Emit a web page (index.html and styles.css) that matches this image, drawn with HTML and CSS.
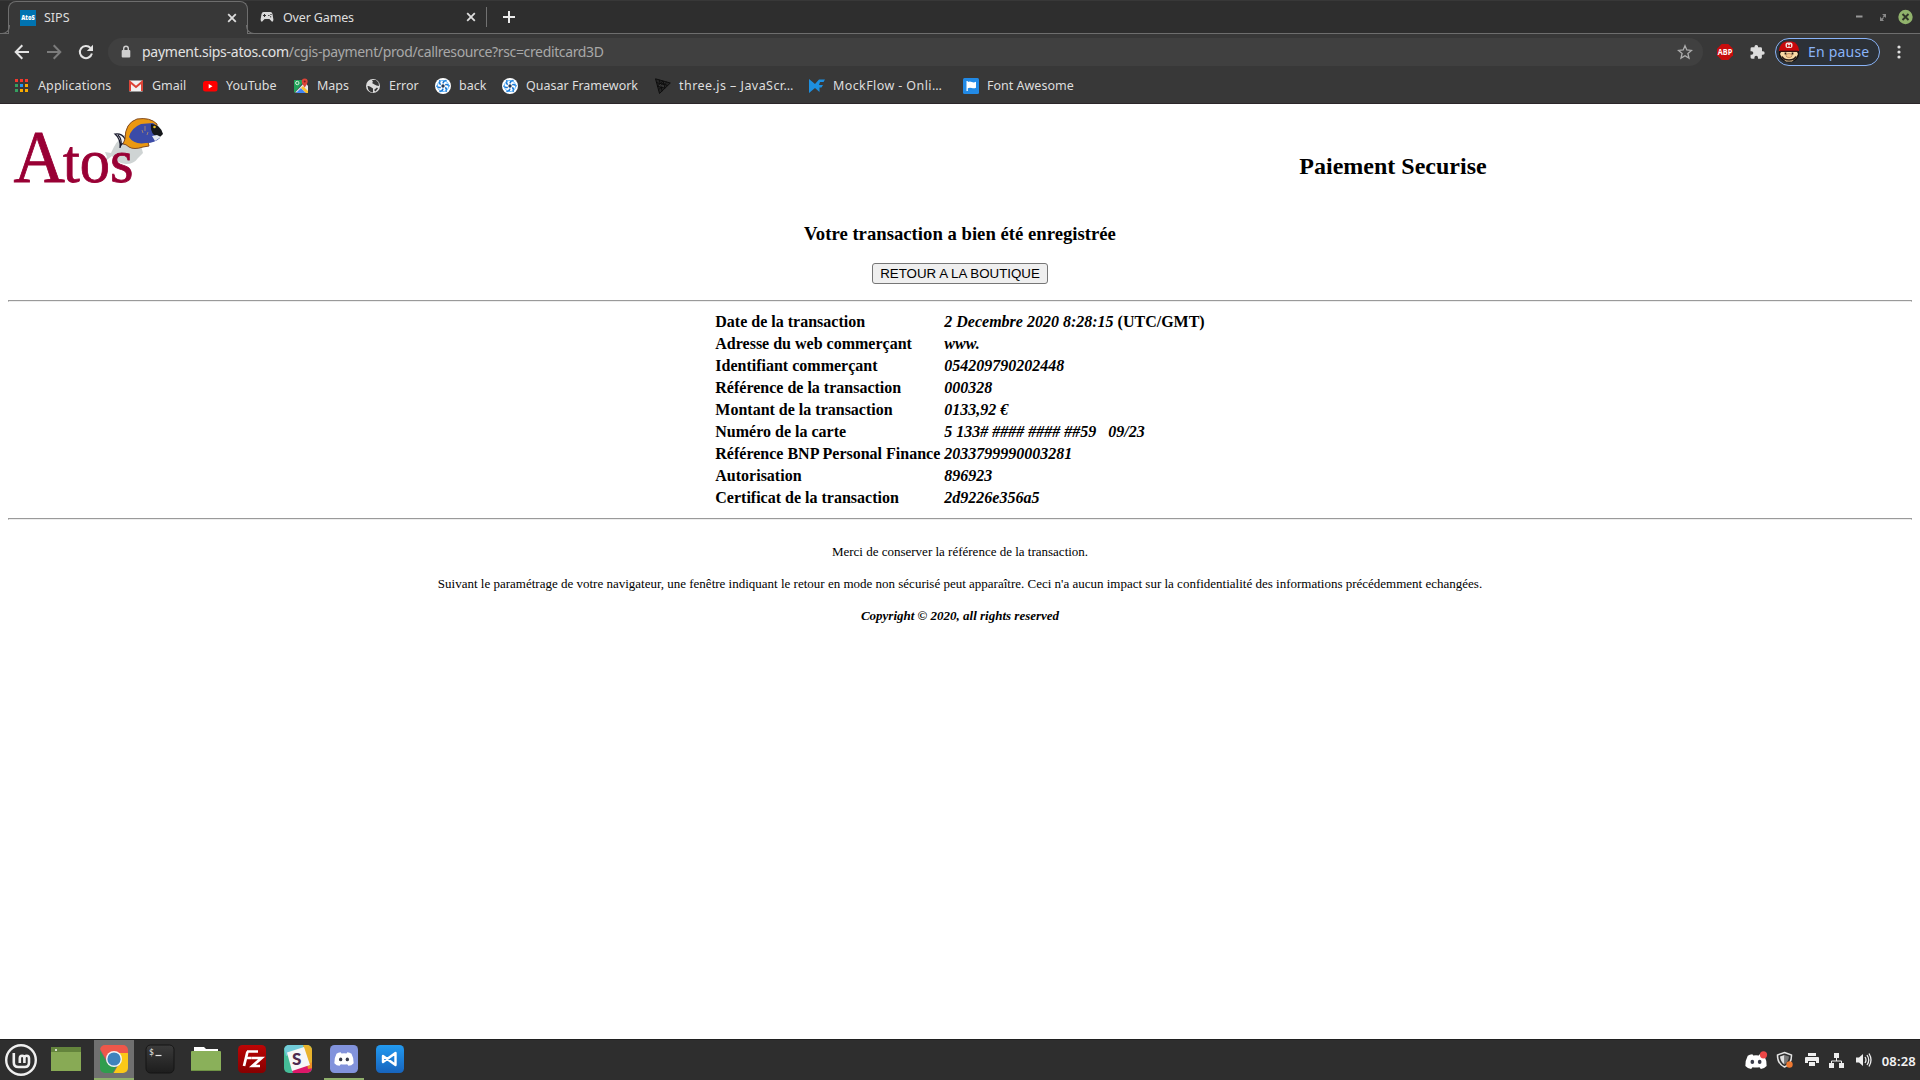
FILE: index.html
```html
<!DOCTYPE html>
<html lang="fr">
<head>
<meta charset="utf-8">
<title>SIPS</title>
<link rel="stylesheet" href="styles.css">
</head>
<body>
<svg width="0" height="0" class="defs">
  <symbol id="quasar" viewBox="0 0 16 16"><circle cx="8" cy="8" r="8" fill="#fff"/><g fill="none" stroke="#1976d2" stroke-width="1.5"><path id="arm" d="M8 5.4Q8.3 2.8 11.6 2.6"/><use href="#arm" transform="rotate(60 8 8)"/><use href="#arm" transform="rotate(120 8 8)"/><use href="#arm" transform="rotate(180 8 8)"/><use href="#arm" transform="rotate(240 8 8)"/><use href="#arm" transform="rotate(300 8 8)"/></g><circle cx="8" cy="8" r="5.6" fill="none" stroke="#42a5f5" stroke-width=".8"/><circle cx="8" cy="8" r="1.7" fill="#263b59"/></symbol>
  <symbol id="close" viewBox="0 0 10 10"><path d="M1.2 1.2l7.6 7.6M8.8 1.2L1.2 8.8" stroke="#dedede" stroke-width="1.8"/></symbol>
  <symbol id="discord" viewBox="0 0 24 18"><path fill="#fff" d="M8 1L9 2.4Q12 2 15 2.4L16 1Q19 1.2 21 2.6Q24 8 23.6 14Q21 17 17.3 17.2L15.8 15.2Q12 16 8.2 15.2L6.700 17.2Q3 17 .4 14Q0 8 3 2.6Q5 1.2 8 1z"/><ellipse cx="8" cy="9.5" rx="2" ry="2.3" class="eye"/><ellipse cx="16" cy="9.5" rx="2" ry="2.3" class="eye"/></symbol>
</svg>

<header class="browser">
  <div class="tabs">
    <div class="tab tab-active">
      <svg class="favicon" width="16" height="16" viewBox="0 0 16 16"><rect width="16" height="16" fill="#0073b1"/><text x="1.2" y="10.4" textLength="13.6" lengthAdjust="spacingAndGlyphs" class="atos-mark">AtoS</text></svg>
      <span class="tab-title t-sips">SIPS</span>
      <svg class="tab-close" width="10" height="10"><use href="#close"/></svg>
    </div>
    <div class="tab tab-second">
      <svg width="14" height="12" viewBox="0 0 14 12"><path fill="#d8d8d8" d="M3.5 1h7Q12 1 12.5 3L13.4 8.5Q13.4 10.8 12 10.8L9.4 8H4.6L2 10.8Q.6 10.8.6 8.5L1.5 3Q2 1 3.5 1z"/><path stroke="#2e2e2e" d="M3 4.5h3M4.5 3v3M8.2 4.5h1.3M10.4 3.5h1.2M10 5.8h1.2"/></svg>
      <span class="tab-title t-games">Over Games</span>
      <svg class="tab-close" width="10" height="10"><use href="#close"/></svg>
    </div>
    <i class="tab-separator"></i>
    <svg class="new-tab" width="12" height="12" viewBox="0 0 12 12"><path d="M6 0v12M0 6h12" stroke="#ececec" stroke-width="2"/></svg>
    <div class="window-buttons">
      <svg width="62" height="16" viewBox="0 0 62 16"><path d="M0 7.500h6.500" stroke="#979797" stroke-width="2"/><path fill="#888" d="M26 5h4v4l-1.300-1.300-1.500 1-.5-.7 1-1.500zM24 7.500v4.500h4l-1.300-1.500 1-1-.7-1-1.500 1z"/><circle cx="49.500" cy="8" r="7.200" fill="#91b36c"/><path d="M46.500 5l6 6M52.500 5l-6 6" stroke="#303528" stroke-width="1.900"/></svg>
    </div>
  </div>

  <div class="toolbar">
    <svg class="nav" width="16" height="16" viewBox="0 0 16 16"><path d="M15 8H2M8.300 1.300L1.700 8l6.600 6.700" fill="none" stroke="#e4e4e4" stroke-width="2"/></svg>
    <svg class="nav" width="16" height="16" viewBox="0 0 16 16"><path d="M1 8h13M7.700 1.300L14.300 8l-6.600 6.700" fill="none" stroke="#7c7c7c" stroke-width="2"/></svg>
    <svg class="nav" width="16" height="16" viewBox="0 0 16 16"><path d="M13.900 9.500A6.100 6.100 0 1 1 12.500 3.900" fill="none" stroke="#e4e4e4" stroke-width="2"/><path d="M15 .8V7H8.800z" fill="#e4e4e4"/></svg>
    <div class="address">
      <svg width="10" height="14" viewBox="0 0 10 14"><path d="M2.700 6V3.600a2.300 2.300 0 0 1 4.600 0V6" fill="none" stroke="#cfcfcf" stroke-width="1.400"/><rect x=".7" y="5" width="8.600" height="7.600" rx="1" fill="#cfcfcf"/></svg>
      <span class="url"><b>payment.sips-atos.com</b>/cgis-payment/prod/callresource?rsc=creditcard3D</span>
      <svg class="star" width="16" height="16" viewBox="0 0 16 16"><path d="M8 1.700l1.800 4.300 4.700.4-3.600 3.100 1.100 4.600L8 11.700l-4 2.400 1.100-4.600L1.500 6.400l4.700-.4z" fill="none" stroke="#adadad" stroke-width="1.300"/></svg>
    </div>
    <svg class="abp" width="16" height="16" viewBox="0 0 16 16"><path fill="#c70d0d" d="M4.700 0h6.600L16 4.700v6.600L11.300 16H4.700L0 11.300V4.700z"/><text x=".8" y="10.900" textLength="14.400" lengthAdjust="spacingAndGlyphs" class="abp-text">ABP</text></svg>
    <svg class="puzzle" width="16" height="16" viewBox="0 0 24 24"><path fill="#dcdcdc" d="M21 11h-1.500V7a2 2 0 0 0-2-2h-4V3.500a2.700 2.700 0 0 0-5.200 0V5h-4a2 2 0 0 0-2 2v3.800h1.500a2.700 2.700 0 0 1 0 5.400H2.300V20a2 2 0 0 0 2 2h3.800v-1.500a2.700 2.700 0 0 1 5.400 0V22h3.800a2 2 0 0 0 2-2v-4H21a2.500 2.500 0 0 0 0-5z"/></svg>
    <div class="profile">
      <svg width="22" height="22" viewBox="0 0 22 22"><path fill="#171312" d="M1 9h20v6q-3 6-10 6.500Q4 21 1 15z"/><path fill="#f9d9a6" d="M3 11h16l1 2-2 4-4 3.500H8L4 17l-2-4z"/><path fill="#c8080b" d="M1 9Q2 2 8 .5h6Q20 2 21 9v1H1z"/><rect x="7.500" y="1.500" width="7" height="5.500" rx="2" fill="#f4dcd8"/><path d="M9.500 6V3.500l1.500 2 1.500-2V6" fill="none" stroke="#c8080b"/><path d="M2 10h18" stroke="#571313"/><path d="M7.500 11.500v2M14.500 11.500v2" stroke="#241713" stroke-width="1.700"/><path d="M4 15.500q1.500 3.500 7 3.500t7-3.500" fill="none" stroke="#241713" stroke-width="1.600"/><ellipse cx="11" cy="14.500" rx="3" ry="2" fill="#f6c78f" stroke="#8a5b3a" stroke-width=".5"/></svg>
      <span>En pause</span>
    </div>
    <svg class="menu" width="4" height="14" viewBox="0 0 4 14"><g fill="#e0e0e0"><circle cx="2" cy="2" r="1.600"/><circle cx="2" cy="7" r="1.600"/><circle cx="2" cy="12" r="1.600"/></g></svg>
  </div>

  <nav class="bookmarks">
    <div class="bm"><svg width="16" height="16" viewBox="0 0 16 16"><path fill="#f3392e" d="M1 1h3v3H1zM6 1h3v3H6zM11 1h3v3h-3z"/><path fill="#34a060" d="M1 6h3v3H1zM1 11h3v3H1z"/><path fill="#2196f3" d="M6 6h3v3H6z"/><path fill="#f9ab00" d="M11 6h3v3h-3zM6 11h3v3H6zM11 11h3v3h-3z"/></svg><span class="w-apps">Applications</span></div>
    <div class="bm"><svg width="16" height="16" viewBox="0 0 16 16"><rect x="1" y="2.500" width="14" height="11" rx="1" fill="#f2f2f2"/><path d="M2 13V4l6 5 6-5v9" fill="none" stroke="#dc4437" stroke-width="2"/></svg><span class="w-gmail">Gmail</span></div>
    <div class="bm"><svg width="16" height="16" viewBox="0 0 16 16"><rect x="1" y="3" width="14.500" height="10.500" rx="2.500" fill="#f00"/><path fill="#fff" d="M6.700 6v4.500l3.800-2.200z"/></svg><span class="w-yt">YouTube</span></div>
    <div class="bm"><svg width="16" height="16" viewBox="0 0 16 16"><path fill="#20a35a" d="M1 2h11L2 14.500H1z"/><path fill="#e8e8e8" d="M2 14.500L12 4l3 4v6.500z"/><path fill="#4285f4" d="M3 15l5-5 5 5z"/><path fill="#fbc02d" d="M8 10l2-2 5 5v2h-2z"/><circle cx="4.300" cy="5" r="1.700" fill="none" stroke="#e8f5e9" stroke-width=".9"/><path fill="#dc4437" d="M8.700 3.500a3 3 0 0 1 6 0q0 1.800-3 6-3-4.200-3-6z"/><circle cx="11.700" cy="3.500" r="1" fill="#7b231e"/></svg><span class="w-maps">Maps</span></div>
    <div class="bm"><svg width="16" height="16" viewBox="0 0 16 16"><circle cx="8" cy="8" r="7" fill="#dcdcdc"/><path fill="#383838" d="M2.500 8q2-.5 4 1.500l1.500 1v4Q3 14 2.500 8zM7 2h4l2.500 2.500L14 8l-2.500-.5-2-1L7 5l1-1z"/><path fill="#383838" d="M9 12l3-2.500 1 1-2.500 3z"/></svg><span class="w-error">Error</span></div>
    <div class="bm"><svg width="16" height="16"><use href="#quasar"/></svg><span class="w-back">back</span></div>
    <div class="bm"><svg width="16" height="16"><use href="#quasar"/></svg><span class="w-quasar">Quasar Framework</span></div>
    <div class="bm"><svg width="16" height="16" viewBox="0 0 16 16"><path d="M.5.800L15.300 5 4.500 15.500zM2.500 8.200L10 10.200 8 2.900zM1.500 4.500l7.500 2 2.700-2.600M5.800 7.500l3-3M3.500 11.800l3.800-3.500M5.200 5.500L4.200 1.800M6.200 9.200l1 4M9.500 6.200l3 1.500" fill="#252525" stroke="#0b0b0b" stroke-width=".9"/></svg><span class="w-three">three.js – JavaScr…</span></div>
    <div class="bm"><svg width="16" height="16" viewBox="0 0 16 16"><path fill="#1d8fe0" d="M0 1l6 5 4-4.500h6L14.500 4H11l-1 3h4l-1.500 2.500h-2V14L6 10l-6 5z"/></svg><span class="w-mock">MockFlow - Onli…</span></div>
    <div class="bm"><svg width="16" height="16" viewBox="0 0 16 16"><rect width="16" height="16" rx="1.500" fill="#228ae6"/><path fill="#fff" d="M3.500 3h1.300v1q2-1 4 0t4.200-.2v6q-2 1-4.200.2t-4 .2V13H3.500z"/></svg><span class="w-fa">Font Awesome</span></div>
  </nav>
</header>

<main class="page">
  <div class="page-head">
    <svg class="logo" width="158" height="74" viewBox="0 0 158 74">
      <path fill="#cfd4d4" d="M97 36l6 1q5-12 13-18h10q6 5 9 18l-5 5q-4 6-12 6-9-1-14-8l-8 6 3-5z"/>
      <text class="logo-text" x="5.500" y="65.500" textLength="120" lengthAdjust="spacingAndGlyphs"><tspan font-size="73">A</tspan><tspan font-size="62" dx="-2">tos</tspan></text>
      <g transform="translate(-3 1)">
      <path fill="#f5f5f7" stroke="#18192c" stroke-width="1.200" d="M110 17q7-1 10 5v4q-4 0-5 5 1-9-5-14zM113 18q4 4 3 10"/>
      <path fill="#eb9811" stroke="#824c24" stroke-width="1" d="M120 22q0-16 12-20 13-2 20 5v14q-5 5-9 4l1 4-6 1q-9 3-14 0-3-3-6-3z"/>
      <path fill="#3b4ba8" d="M124 20q2-9 12-13l12-1q7 4 7 15-5 5-14 5-12 2-17-6z"/>
      <path fill="#15171b" d="M146 7q9 0 12 10l-3 3-6-2q-4-4-3-11z"/>
      <path fill="#e4e8ef" d="M147 19l5-1 4 2-6 4z"/><circle cx="149.500" cy="10" r="1.300" fill="#e6be29"/><path d="M140 9v5M137 13l1 3M143 15l-1 3" stroke="#9c8176"/>
      </g>
    </svg>
    <h2>Paiement Securise</h2>
  </div>
  <h3>Votre transaction a bien été enregistrée</h3>
  <button class="return-button">RETOUR A LA BOUTIQUE</button>
  <hr>
  <table class="details">
    <tr><td>Date de la transaction</td><td><i>2 Decembre 2020 8:28:15</i> (UTC/GMT)</td></tr>
    <tr><td>Adresse du web commerçant</td><td><i>www.</i></td></tr>
    <tr><td>Identifiant commerçant</td><td><i>054209790202448</i></td></tr>
    <tr><td>Référence de la transaction</td><td><i>000328</i></td></tr>
    <tr><td>Montant de la transaction</td><td><i>0133,92 €</i></td></tr>
    <tr><td>Numéro de la carte</td><td><i>5 133# #### #### ##59 &nbsp; 09/23</i></td></tr>
    <tr><td>Référence BNP Personal Finance</td><td><i>2033799990003281</i></td></tr>
    <tr><td>Autorisation</td><td><i>896923</i></td></tr>
    <tr><td>Certificat de la transaction</td><td><i>2d9226e356a5</i></td></tr>
  </table>
  <hr>
  <div class="notes">
    <p>Merci de conserver la référence de la transaction.</p>
    <p>Suivant le paramétrage de votre navigateur, une fenêtre indiquant le retour en mode non sécurisé peut apparaître. Ceci n'a aucun impact sur la confidentialité des informations précédemment echangées.</p>
    <p class="copyright">Copyright © 2020, all rights reserved</p>
  </div>
</main>

<footer class="taskbar">
  <div class="launchers">
    <div class="app mint"><svg width="32" height="32" viewBox="0 0 32 32"><circle cx="16" cy="16" r="14.800" fill="#303030" stroke="#efefef" stroke-width="2.400"/><path d="M8.800 9v9.500q0 4.500 4.500 4.500h6.500q4.200 0 4.200-4.500v-4q0-2.700-2.300-2.700t-2.300 2.700V19M19.400 14.500q0-2.700-2.300-2.700t-2.300 2.700V19" fill="none" stroke="#efefef" stroke-width="2.600"/></svg></div>
    <div class="app files"><svg width="30" height="24" viewBox="0 0 30 24"><rect width="30" height="24" fill="#88aa55"/><rect width="30" height="5" fill="#64843c"/><circle cx="5" cy="3" r="1" fill="#fff"/></svg></div>
    <div class="app focused running"><svg width="30" height="30" viewBox="0 0 30 30"><defs><clipPath id="round"><rect x="1" y="1" width="28" height="28" rx="5"/></clipPath></defs><g clip-path="url(#round)"><path fill="#ee574a" d="M0 0h30v9H15L8 17 1 5z"/><path fill="#fbc817" d="M15 9h15v21H14l7-12z"/><path fill="#2f9d4d" d="M0 5l8 14 9 4-4 7H0z"/></g><circle cx="15" cy="15" r="8" fill="#f2f5f6"/><circle cx="15" cy="15" r="6.600" fill="#3f83bd"/></svg></div>
    <div class="app"><svg width="30" height="30" viewBox="0 0 30 30"><defs><linearGradient id="term" x2="0" y2="1"><stop stop-color="#3b3b3b"/><stop offset="1" stop-color="#1d1d1d"/></linearGradient></defs><rect x="1" y="1" width="28" height="28" rx="4.500" fill="url(#term)" stroke="#151515"/><text x="4" y="11" class="prompt">$</text><path d="M10.500 11.500h6" stroke="#e7e7e7" stroke-width="1.200"/></svg></div>
    <div class="app"><svg width="30" height="24" viewBox="0 0 30 24"><path fill="#fff" d="M3 0h10l2 2h12v5H3z"/><rect y="4" width="30" height="20" rx="1" fill="#8ab05a"/><path d="M0 23.500h30" stroke="#6f9345"/></svg></div>
    <div class="app"><svg width="30" height="30" viewBox="0 0 30 30"><defs><linearGradient id="fz" x2="0" y2="1"><stop stop-color="#bd0505"/><stop offset="1" stop-color="#870000"/></linearGradient></defs><rect x="1" y="1" width="28" height="28" rx="4.500" fill="url(#fz)"/><path d="M10 7.500h11M10.500 7.500L7 22M8.800 14h6M15 14h9.500L15.500 22H23" fill="none" stroke="#fff" stroke-width="2.700"/></svg></div>
    <div class="app"><svg width="30" height="30" viewBox="0 0 30 30"><g clip-path="url(#round)"><rect width="30" height="30" fill="#45bd98"/><path fill="#72cbd8" d="M0 0h20l1 6L3 12z"/><path fill="#e9b32c" d="M20 0h10v20l-6 3z"/><path fill="#dc1768" d="M9 25l21-6v11H10z"/><path fill="#ef8f27" d="M24 20l6-2v6l-5 1z"/></g><path fill="#f6f6f6" d="M4 8.500L21 3l6 18-18 6z"/><text x="9" y="21" class="slack">S</text></svg></div>
    <div class="app running discord"><svg width="30" height="30" viewBox="0 0 30 30"><rect x="1" y="1" width="28" height="28" rx="4.500" fill="#8293dc"/><use href="#discord" x="5" y="7.500" width="20" height="15"/></svg></div>
    <div class="app"><svg width="30" height="30" viewBox="0 0 30 30"><defs><linearGradient id="vs" x2="0" y2="1"><stop stop-color="#229af0"/><stop offset="1" stop-color="#1764bd"/></linearGradient></defs><rect x="1" y="1" width="28" height="28" rx="4.500" fill="url(#vs)"/><path d="M8 12l12.500 9V9L8 18z" fill="none" stroke="#fff" stroke-width="2.400" stroke-linejoin="round"/></svg></div>
  </div>
  <div class="tray">
    <svg class="tray-chat" width="24" height="19" viewBox="0 0 24 19"><use href="#discord" x="1" y="2" width="22" height="17"/><circle cx="19.500" cy="3.800" r="3.600" fill="#ed4747"/></svg>
    <svg class="tray-shield" width="18" height="18" viewBox="0 0 18 18"><path d="M8.500 1.500L15.500 4q.3 8.500-7 12-7.300-3.500-7-12z" fill="#2f2f2f" stroke="#e4e4e4" stroke-width="1.500"/><path fill="#e1e1e1" d="M8.500 4L4 5.500q.3 5 4.500 8z"/><path fill="#777" d="M8.500 4L13 5.500q-.3 5-4.500 8z"/><circle cx="13.500" cy="13.500" r="3.200" fill="#ee7831"/></svg>
    <svg width="14" height="14" viewBox="0 0 14 14"><path fill="#eee" d="M3 0h8v3H3zM1 4h12q1 0 1 1v5h-3V8H3v2H0V5q0-1 1-1zM4 9h6v4H4z"/></svg>
    <svg class="tray-net" width="15" height="15" viewBox="0 0 15 15"><path fill="#eee" d="M5 0h5v5H5zM0 10h5v5H0zM10 10h5v5h-5z"/><path d="M7.500 5v3M2.500 10V8h10v2" fill="none" stroke="#eee"/></svg>
    <svg width="16" height="16" viewBox="0 0 16 16"><path fill="#eee" d="M0 5.500h3L7 2v12L3 10.500H0z"/><path d="M9 5q2 3 0 6M11 3q3.500 5 0 10M13 1.500q4 6.500 0 13" fill="none" stroke="#eee" stroke-width="1.300"/></svg>
    <time>08:28</time>
  </div>
</footer>
</body>
</html>
```
FILE: styles.css
```css
* { box-sizing: border-box; }
body { margin: 0; width: 1920px; height: 1080px; overflow: hidden; display: flex; flex-direction: column; background: #fff; font-family: "Liberation Serif", serif; color: #000; }
svg { display: block; flex: none; }
.defs { position: absolute; }
.browser { height: 104px; flex: none; background: #383838; border-bottom: 1px solid #2b2629; font-family: "Noto Sans", sans-serif; color: #dedede; }
.tabs { height: 34px; display: flex; align-items: center; background: #2e2e2e; border-top: 1px solid #383838; border-bottom: 1px solid #6e6e6e; }
.tab { height: 33px; display: flex; align-items: center; flex: none; }
.tab-active { position: relative; width: 240px; margin-left: 8px; padding: 0 10px 0 11px; background: #383838; border: 1px solid #6e6e6e; border-bottom: 0; border-radius: 8px 8px 0 0; }
.tab-active::before, .tab-active::after { content: ""; position: absolute; bottom: 0; width: 8px; height: 8px; border-bottom: 1px solid #6e6e6e; }
.tab-active::before { left: -8px; border-right: 1px solid #6e6e6e; border-bottom-right-radius: 8px; }
.tab-active::after { right: -8px; border-left: 1px solid #6e6e6e; border-bottom-left-radius: 8px; }
.tab-second { width: 238px; padding: 0 10px 0 12px; }
.tab-title { margin-left: 8px; font-size: 12.5px; white-space: nowrap; }
.t-games { margin-left: 9px; letter-spacing: -.15px; }
.tab-close { margin-left: auto; }
.tab-separator { width: 1px; height: 20px; background: #717171; }
.new-tab { margin-left: 16px; }
.window-buttons { margin-left: auto; padding-right: 2px; }
.atos-mark { font: 900 6.5px "Open Sans", sans-serif; fill: #fff; }
.toolbar { height: 36px; display: flex; align-items: center; padding-left: 14px; }
.nav { margin-right: 16px; }
.address { display: flex; align-items: center; width: 1595px; height: 28px; margin-left: -2px; padding: 0 10px 0 13px; border-radius: 14px; background: #404040; }
.url { margin-left: 11px; padding-bottom: 2px; font-size: 14px; letter-spacing: -.36px; color: #a8a8a8; white-space: nowrap; }
.url b { font-weight: 400; letter-spacing: -.26px; color: #e2e2e2; }
.star { margin-left: auto; }
.abp { margin-left: 14px; }
.abp-text { font: 700 8px "Open Sans", sans-serif; fill: #fff; }
.puzzle { margin-left: 16px; }
.profile { display: flex; align-items: center; width: 105px; height: 28px; margin-left: 10px; padding-left: 2px; border: 1px solid #8ab4f8; border-radius: 14px; background: #2c3137; color: #8ab4f8; font-size: 14px; }
.profile span { margin-left: 8px; padding-bottom: 2px; letter-spacing: .2px; white-space: nowrap; }
.menu { margin-left: 17px; }
.bookmarks { display: grid; grid-template-columns: 114px 74px 91px 72px 70px 67px 153px 154px 154px 130px; padding-left: 14px; height: 31px; align-items: center; }
.bm { display: flex; align-items: center; gap: 8px; font-size: 12.5px; white-space: nowrap; }
.w-apps { letter-spacing: .13px; }
.w-three { letter-spacing: .45px; }
.w-mock { letter-spacing: .4px; }
.page { display: flex; flex-direction: column; flex: 1; padding: 8px; }
.page-head { display: grid; grid-template-columns: 826px 1fr; height: 78px; padding-top: 4px; }
.logo-text { font-family: "Liberation Serif", serif; fill: #990035; stroke: #990035; stroke-width: .8px; }
h2 { width: 1118px; margin: 36px 0 0; text-align: center; font-size: 24px; line-height: 28px; }
h3 { margin: 33px 0 0; text-align: center; font-size: 18.72px; line-height: 22px; }
.return-button { align-self: center; width: 176px; height: 21px; margin: 18px 0 16px; padding: 1px 6px; font: 13.333px "Liberation Sans", sans-serif; color: #000; background: #efefef; border: 1px solid #767676; border-radius: 3px; }
hr { width: 100%; height: 2px; margin: 0; border: 1px solid #9a9a9a; border-bottom-color: #eee; }
.details { align-self: center; margin: 8px 0; border-spacing: 2px; font-weight: 700; font-size: 16px; line-height: 18px; }
.details td { padding: 1px; white-space: nowrap; }
.notes { padding-top: 24px; text-align: center; font-size: 13px; line-height: 15px; }
.notes p { margin: 0 0 17px; }
.copyright { font-weight: 700; font-style: italic; }
.taskbar { height: 41px; flex: none; display: flex; justify-content: space-between; background: #2e2e2e; border-top: 1px solid #202020; font-family: "Noto Sans", sans-serif; }
.launchers { display: flex; gap: 6px; }
.app { width: 40px; height: 40px; display: flex; align-items: center; justify-content: center; border-bottom: 2px solid transparent; }
.mint { border: 0; padding-left: 2px; }
.files { margin-right: 2px; }
.focused { background: #707070; }
.running { border-bottom-color: #8faf6b; }
.eye { fill: #3a3d4b; }
.discord { --eye: #8293dc; }
.prompt { font: 8px "DejaVu Sans Mono", monospace; fill: #eee; }
.slack { font: 900 17px Lato, sans-serif; fill: #4d294e; }
.tray { display: flex; align-items: center; padding: 0 4px 0 0; color: #f3f3f3; }
.tray svg { margin-right: 10px; }
.tray .tray-chat { margin-right: 8px; }
.tray .tray-shield { margin-right: 11px; }
.tray .tray-net { margin-right: 12px; }
.tray time { padding-top: 2px; font-weight: 600; font-size: 13px; letter-spacing: .2px; }
```
